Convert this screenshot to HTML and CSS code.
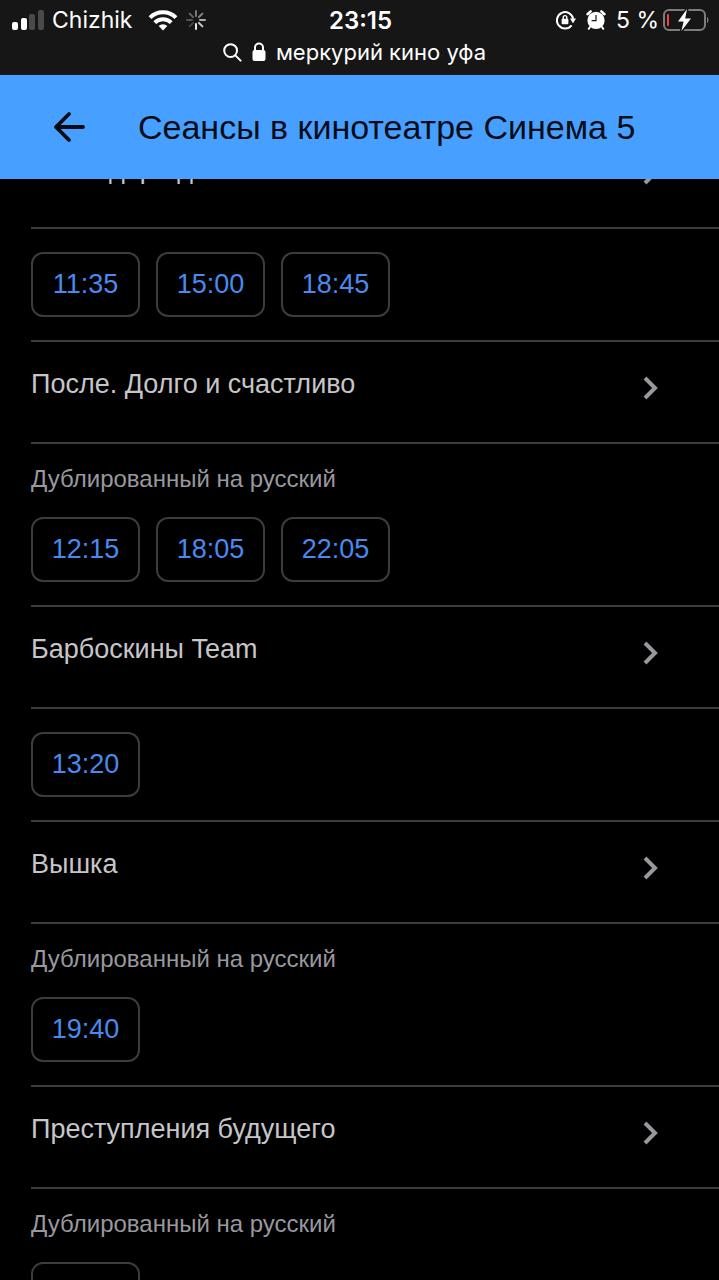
FILE: index.html
```
<!DOCTYPE html>
<html lang="ru">
<head>
  <meta charset="UTF-8" />
  <meta name="viewport" content="width=device-width, initial-scale=1" />
  <title>Сеансы в кинотеатре Синема 5</title>
  <link rel="stylesheet" href="styles.css">
</head>
<body>
  <div class="top">
    <div class="status">
      <div class="status-left">
        <svg width="32" height="20" viewBox="0 0 32 20">
          <rect x="0" y="12" width="6" height="8" rx="2" fill="#fff"/>
          <rect x="9" y="8" width="6" height="12" rx="2" fill="#fff"/>
          <rect x="17" y="4" width="6" height="16" rx="2" fill="#4a4a4a"/>
          <rect x="26" y="0" width="6" height="20" rx="2" fill="#4a4a4a"/>
        </svg>
        <span class="carrier">Chizhik</span>
        <svg class="wifi" width="30" height="22" viewBox="0 0 30 22" fill="none" stroke="#fff" stroke-width="4">
          <path d="M2 8.6a18.4 18.4 0 0 1 26 0"/>
          <path d="M6.8 13.6a11.6 11.6 0 0 1 16.4 0"/>
          <path d="M15 21.5l-4.3-4.4a6.1 6.1 0 0 1 8.6 0z" fill="#fff" stroke="none"/>
        </svg>
        <svg width="20" height="20" viewBox="0 0 20 20" stroke-width="2" stroke-linecap="round">
          <path d="M10 1v5" stroke="#777"/>
          <path d="M16.4 3.6l-3.5 3.5" stroke="#888"/>
          <path d="M19 10h-5" stroke="#aaa"/>
          <path d="M16.4 16.4l-3.5-3.5" stroke="#ccc"/>
          <path d="M10 19v-5" stroke="#e8e8e8"/>
          <path d="M3.6 16.4l3.5-3.5" stroke="#444"/>
          <path d="M1 10h5" stroke="#555"/>
          <path d="M3.6 3.6l3.5 3.5" stroke="#666"/>
        </svg>
      </div>
      <div class="clock">23:15</div>
      <div class="status-right">
        <svg width="20" height="20" viewBox="0 0 20 20">
          <path d="M15.6 15.4a8.2 8.2 0 1 1 1.6-6.6" fill="none" stroke="#fff" stroke-width="2"/>
          <path d="M14 8.6h6l-3 4.6z" fill="#fff"/>
          <rect x="5.6" y="8.8" width="6.8" height="5.4" rx="1" fill="#fff"/>
          <path d="M7.2 9V7.4a1.8 1.8 0 0 1 3.6 0V9" fill="none" stroke="#fff" stroke-width="1.4"/>
        </svg>
        <svg width="20" height="20" viewBox="0 0 20 20">
          <circle cx="10" cy="10.4" r="8.6" fill="#fff"/>
          <path d="M1.6 4.2l3-2.8M18.4 4.2l-3-2.8" stroke="#fff" stroke-width="2.6" stroke-linecap="round"/>
          <path d="M4 17l-1.2 1.8M16 17l1.2 1.8" stroke="#fff" stroke-width="2" stroke-linecap="round"/>
          <path d="M10 5v5.6H5.6" fill="none" stroke="#161616" stroke-width="1.2"/>
        </svg>
        <span class="percent">5 %</span>
        <svg class="battery" width="46" height="24" viewBox="0 0 46 24">
          <rect x="1" y="2" width="41" height="20" rx="5" fill="none" stroke="#7c7c7c" stroke-width="2"/>
          <path d="M44 9c2 1 2 5 0 6z" fill="#7c7c7c"/>
          <rect x="4" y="6" width="2" height="12" rx="1" fill="#f0443c"/>
          <path d="M24 1L15 13.4h5.6L18.4 23 28 10.4h-5.8z" fill="#fff" stroke="#161616" stroke-width="3" paint-order="stroke"/>
        </svg>
      </div>
    </div>
    <div class="address">
      <svg width="19" height="19" viewBox="0 0 19 19" fill="none" stroke="#fff" stroke-width="2" stroke-linecap="round">
        <circle cx="7.6" cy="7.6" r="6.4"/>
        <path d="M12.4 12.4l5.2 5.2"/>
      </svg>
      <svg width="14" height="20" viewBox="0 0 14 20">
        <rect x="0.5" y="8" width="13" height="11" rx="2" fill="#fff"/>
        <path d="M3 9V5.6a4 4 0 0 1 8 0V9" fill="none" stroke="#fff" stroke-width="2"/>
      </svg>
      <span>меркурий кино уфа</span>
    </div>
  </div>

  <header>
    <button class="back" type="button" aria-label="Назад">
      <svg width="32" height="32" viewBox="0 0 32 32" fill="none" stroke="#060c16" stroke-width="3.8" stroke-linecap="round" stroke-linejoin="round">
        <path d="M16 3L3 16l13 13M3 16h27"/>
      </svg>
    </button>
    <h1>Сеансы в кинотеатре Синема 5</h1>
  </header>

  <main>
    <a class="movie" href="#">
      <span>Закат дара дня</span>
      <svg class="chevron" viewBox="0 0 16 24"><path d="M2 2l10 10L2 22"/></svg>
    </a>
    <section class="sessions">
      <div class="times">
        <button type="button">11:35</button>
        <button type="button">15:00</button>
        <button type="button">18:45</button>
      </div>
    </section>

    <a class="movie" href="#">
      <span>После. Долго и счастливо</span>
      <svg class="chevron" viewBox="0 0 16 24"><path d="M2 2l10 10L2 22"/></svg>
    </a>
    <section class="sessions">
      <p>Дублированный на русский</p>
      <div class="times">
        <button type="button">12:15</button>
        <button type="button">18:05</button>
        <button type="button">22:05</button>
      </div>
    </section>

    <a class="movie" href="#">
      <span>Барбоскины Team</span>
      <svg class="chevron" viewBox="0 0 16 24"><path d="M2 2l10 10L2 22"/></svg>
    </a>
    <section class="sessions">
      <div class="times">
        <button type="button">13:20</button>
      </div>
    </section>

    <a class="movie" href="#">
      <span>Вышка</span>
      <svg class="chevron" viewBox="0 0 16 24"><path d="M2 2l10 10L2 22"/></svg>
    </a>
    <section class="sessions">
      <p>Дублированный на русский</p>
      <div class="times">
        <button type="button">19:40</button>
      </div>
    </section>

    <a class="movie" href="#">
      <span>Преступления будущего</span>
      <svg class="chevron" viewBox="0 0 16 24"><path d="M2 2l10 10L2 22"/></svg>
    </a>
    <section class="sessions">
      <p>Дублированный на русский</p>
      <div class="times">
        <button type="button" aria-label="Сеанс"></button>
      </div>
    </section>
  </main>
</body>
</html>
```

FILE: styles.css
```
* {
  box-sizing: border-box;
}
body {
  display: flex;
  flex-direction: column;
  height: 100vh;
  margin: 0;
  overflow: hidden;
  background-color: #000;
  font-family: "Liberation Sans", Arial, sans-serif;
}
svg {
  display: block;
  flex: none;
}
.top {
  flex: none;
  height: 75px;
  background-color: #161616;
  color: #fff;
  font-family: Inter, sans-serif;
}
.status {
  display: grid;
  grid-template-columns: 1fr auto 1fr;
  align-items: center;
  height: 40px;
  padding: 0 10px 0 12px;
}
.status-left,
.status-right {
  display: flex;
  align-items: center;
  gap: 8px;
  font-size: 23px;
}
.status-right {
  justify-content: flex-end;
  gap: 10px;
}
.wifi {
  margin-left: 8px;
}
.battery {
  margin-left: -6px;
}
.clock {
  font-size: 24px;
  font-weight: 600;
}
.address {
  display: flex;
  align-items: center;
  justify-content: center;
  gap: 10px;
  height: 24px;
  padding-right: 10px;
  font-size: 22px;
}
header {
  position: relative;
  z-index: 1;
  flex: none;
  display: flex;
  align-items: center;
  height: 104px;
  padding: 0 53px;
  background-color: #479fff;
}
.back {
  padding: 0;
  border: none;
  background: none;
}
h1 {
  margin: 0 0 0 53px;
  color: #060c16;
  font-size: 34px;
  font-weight: normal;
  white-space: nowrap;
}
/* the list is scrolled, its first row goes under the header */
main {
  flex: none;
  margin-top: -52px;
  padding-left: 31px;
}
.movie {
  display: flex;
  justify-content: space-between;
  height: 102px;
  padding: 26px 60px 0 0;
  border-bottom: 2px solid #3c3c3c;
  color: #c6c6c8;
  font-size: 27px;
  line-height: 32px;
  text-decoration: none;
}
.chevron {
  width: 16px;
  height: 24px;
  margin-top: 8px;
  fill: none;
  stroke: #98989e;
  stroke-width: 4;
}
.sessions {
  padding: 23px 0;
  border-bottom: 2px solid #3c3c3c;
}
.sessions p {
  margin: 0 0 26px;
  color: #98989e;
  font-size: 24px;
  line-height: 24px;
}
.times {
  display: flex;
  gap: 16px;
}
.times button {
  width: 109px;
  height: 65px;
  padding: 0;
  border: 2px solid #3c3c3c;
  border-radius: 12px;
  background: none;
  color: #488af0;
  font-family: inherit;
  font-size: 27px;
}
```
